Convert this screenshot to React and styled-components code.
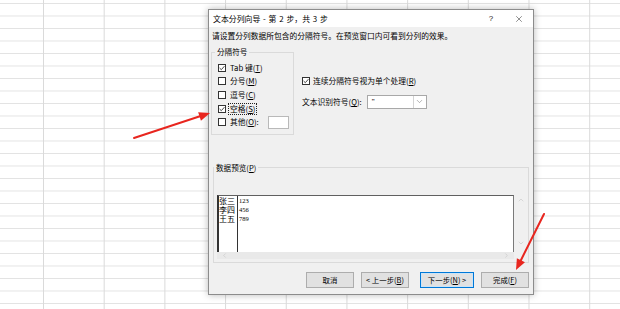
import React from 'react';
import styled, { createGlobalStyle } from 'styled-components';
import { X, ChevronDown, ChevronUp, ChevronLeft, ChevronRight } from 'lucide-react';

const Global = createGlobalStyle`
  html, body { margin: 0; padding: 0; }
  body {
    font-family: "Noto Sans CJK SC", "Noto Sans", sans-serif;
    color: #000;
  }
`;

// 表格背景：网格线
const Sheet = styled.div`
  position: relative;
  width: 620px;
  height: 309px;
  overflow: hidden;
  background-color: #fff;
  background-image:
    linear-gradient(to right, #dadada 1px, transparent 1px),
    linear-gradient(to bottom, #e2e2e2 1px, transparent 1px);
  background-size: 60.7px 100%, 100% 12.5px;
  background-position: 43px 0, 0 3px;
`;

const Dialog = styled.div`
  position: absolute;
  left: 208px;
  top: 9px;
  width: 326px;
  height: 286px;
  box-sizing: border-box;
  background: #f0f0f0;
  border: 1px solid #8c8c8c;
  box-shadow: 0 0 7px rgba(0, 0, 0, 0.28);
  display: flex;
  flex-direction: column;
  font-size: 7.75px;
`;

const TitleBar = styled.div`
  height: 17px;
  background: #fff;
  display: flex;
  align-items: center;
  padding-left: 4px;
  font-size: 7.9px;
`;

const Title = styled.span`
  flex: 1;
  white-space: pre;
  word-spacing: 1px;
`;

const TitleBtn = styled.span`
  width: 28px;
  height: 17px;
  display: flex;
  align-items: center;
  justify-content: center;
  font-family: "Liberation Sans", sans-serif;
  font-size: 8px;
  color: #222;
`;

const Body = styled.div`
  flex: 1;
  display: flex;
  flex-direction: column;
  padding: 0 2px 5px 2px;
`;

const Hint = styled.div`
  margin: 4px 0 0 1px;
  height: 9px;
  line-height: 9px;
  white-space: nowrap;
`;

const Middle = styled.div`
  display: flex;
  margin-top: 7px;
`;

const Group = styled.fieldset`
  margin: ${p => p.$mt || 0}px ${p => p.$mr || 0}px 0 ${p => p.$ml || 0}px;
  min-width: 0;
  width: ${p => (p.$w ? p.$w + 'px' : 'auto')};
  flex: none;
  box-sizing: border-box;
  border: 1px solid #dadada;
  padding: ${p => p.$pad};
`;

const Legend = styled.legend`
  margin-left: -3px;
  padding: 0 2px;
  line-height: 10px;
  height: 10px;
  font-size: 7.6px;
`;

const CheckRow = styled.div`
  display: flex;
  align-items: center;
  height: 13.6px;
  white-space: nowrap;
`;

const Box = styled.span`
  width: 8px;
  height: 8px;
  box-sizing: border-box;
  border: 1px solid #333;
  background: #fff;
  margin-right: 3px;
  display: flex;
  align-items: center;
  justify-content: center;
  flex: none;
`;

const Label = styled.span`
  line-height: 10px;
  padding: 0 1px;
  outline: ${p => (p.$focus ? '1px dotted #222' : 'none')};
`;

const Key = styled.span`
  text-decoration: underline;
`;

const OtherInput = styled.span`
  width: 21px;
  height: 13px;
  margin-left: 8px;
  box-sizing: border-box;
  border: 1px solid #b9b9b9;
  background: #fff;
`;

const Options = styled.div`
  display: flex;
  flex-direction: column;
  padding: 27px 0 0 8px;
`;

const OptRow = styled.div`
  display: flex;
  align-items: center;
  height: 13px;
  margin-bottom: ${p => p.$mb || 0}px;
  white-space: nowrap;
`;

const Select = styled.div`
  display: flex;
  width: 60px;
  height: 14px;
  margin-left: 5px;
  box-sizing: border-box;
  border: 1px solid #a8a8a8;
  background: #fff;
`;

const SelectValue = styled.span`
  flex: 1;
  padding-left: 4px;
  line-height: 11px;
  font-family: "Liberation Sans", sans-serif;
  font-size: 8px;
`;

const SelectArrow = styled.span`
  width: 12px;
  border-left: 1px solid #d4d4d4;
  display: flex;
  align-items: center;
  justify-content: center;
  color: #666;
`;

const Preview = styled.div`
  display: grid;
  grid-template-columns: 1fr 13px;
  grid-template-rows: 57px 7px;
`;

const DataArea = styled.div`
  grid-column: 1;
  grid-row: 1;
  background: #fff;
  border-top: 1px solid #606060;
  border-left: 2px solid #333;
  border-right: 1px solid #7a7a7a;
  display: flex;
`;

const DataCol = styled.div`
  width: ${p => (p.$w ? p.$w + 'px' : 'auto')};
  border-right: ${p => (p.$w ? '1px solid #333' : 'none')};
  padding-left: ${p => p.$pl || 0}px;
  font-family: ${p => (p.$num ? '"Liberation Serif", serif' : 'inherit')};
  font-size: ${p => (p.$num ? '6.5px' : '8px')};
  line-height: 9px;
`;

const DataCell = styled.div`
  height: 9px;
  white-space: nowrap;
`;

const VScroll = styled.div`
  grid-column: 2;
  grid-row: 1 / 3;
  display: flex;
  flex-direction: column;
  justify-content: space-between;
  align-items: center;
  padding: 1px 0 12px;
  color: #b3b3b3;
`;

const HScroll = styled.div`
  grid-column: 1;
  grid-row: 2;
  display: flex;
  justify-content: space-between;
  align-items: center;
  padding: 0 4px;
  background: #e9e9e9;
  color: #b3b3b3;
`;

const Buttons = styled.div`
  display: flex;
  justify-content: flex-end;
  margin-top: 9px;
  padding-right: 2px;
`;

const Button = styled.div`
  width: ${p => p.$w}px;
  height: 16px;
  margin-left: ${p => p.$gap}px;
  box-sizing: border-box;
  background: #e1e1e1;
  border: 1px solid ${p => (p.$primary ? '#0078d7' : '#adadad')};
  box-shadow: ${p => (p.$primary ? 'inset 0 0 0 1px #cce4f7' : 'none')};
  display: flex;
  align-items: center;
  justify-content: center;
  white-space: nowrap;
  font-size: 7.4px;
`;

const Marks = styled.svg`
  position: absolute;
  left: 0;
  top: 0;
  pointer-events: none;
`;

const Check = ({ on }) => (
  <Box>
    {on && (
      <svg width="6" height="6" viewBox="0 0 6 6">
        <polyline points="0.6,3 2.3,4.7 5.4,1.2" fill="none" stroke="#333" strokeWidth="0.9" />
      </svg>
    )}
  </Box>
);

const Arrow = ({ x1, y1, x2, y2 }) => {
  const a = Math.atan2(y2 - y1, x2 - x1);
  const len = 11;
  const w = 4.5;
  const bx = x2 - len * Math.cos(a);
  const by = y2 - len * Math.sin(a);
  const px = -Math.sin(a) * w;
  const py = Math.cos(a) * w;
  return (
    <g>
      <line x1={x1} y1={y1} x2={bx + Math.cos(a) * 2} y2={by + Math.sin(a) * 2} stroke="#e8261f" strokeWidth="2" strokeLinecap="round" />
      <polygon points={`${x2},${y2} ${bx + px},${by + py} ${bx - px},${by - py}`} fill="#e8261f" />
    </g>
  );
};

const delimiters = [
  { text: 'Tab 键(', key: 'T', on: true },
  { text: '分号(', key: 'M' },
  { text: '逗号(', key: 'C' },
  { text: '空格(', key: 'S', on: true, focus: true },
];

const rows = [
  ['张三', '123'],
  ['李四', '456'],
  ['王五', '789'],
];

export default function App() {
  return (
    <Sheet>
      <Global />
      <Dialog>
        <TitleBar>
          <Title>文本分列向导 - 第 2 步，共 3 步</Title>
          <TitleBtn>?</TitleBtn>
          <TitleBtn>
            <X size={10} strokeWidth={1.2} />
          </TitleBtn>
        </TitleBar>
        <Body>
          <Hint>请设置分列数据所包含的分隔符号。在预览窗口内可看到分列的效果。</Hint>
          <Middle>
            <Group $w={83} $pad="4px 0 5px 6px">
              <Legend>分隔符号</Legend>
              {delimiters.map(d => (
                <CheckRow key={d.key}>
                  <Check on={d.on} />
                  <Label $focus={d.focus}>
                    {d.text}<Key>{d.key}</Key>)
                  </Label>
                </CheckRow>
              ))}
              <CheckRow>
                <Check />
                <Label>
                  其他(<Key>O</Key>):
                </Label>
                <OtherInput />
              </CheckRow>
            </Group>
            <Options>
              <OptRow $mb={8}>
                <Check on />
                <span>
                  连续分隔符号视为单个处理(<Key>R</Key>)
                </span>
              </OptRow>
              <OptRow>
                <span>
                  文本识别符号(<Key>Q</Key>):
                </span>
                <Select>
                  <SelectValue>"</SelectValue>
                  <SelectArrow>
                    <ChevronDown size={9} strokeWidth={1.3} />
                  </SelectArrow>
                </Select>
              </OptRow>
            </Options>
          </Middle>
          <Group $ml={2} $mr={2} $mt={28} $pad="22px 1px 3px 3px">
            <Legend>
              数据预览(<Key>P</Key>)
            </Legend>
            <Preview>
              <DataArea>
                <DataCol $w={18}>
                  {rows.map(r => (
                    <DataCell key={r[0]}>{r[0]}</DataCell>
                  ))}
                </DataCol>
                <DataCol $num $pl={1}>
                  {rows.map(r => (
                    <DataCell key={r[1]}>{r[1]}</DataCell>
                  ))}
                </DataCol>
              </DataArea>
              <VScroll>
                <ChevronUp size={8} strokeWidth={1.3} />
                <ChevronDown size={8} strokeWidth={1.3} />
              </VScroll>
              <HScroll>
                <ChevronLeft size={7} strokeWidth={1.3} />
                <ChevronRight size={7} strokeWidth={1.3} />
              </HScroll>
            </Preview>
          </Group>
          <Buttons>
            <Button $w={48} $gap={0}>取消</Button>
            <Button $w={48} $gap={7}>
              &lt; 上一步(<Key>B</Key>)
            </Button>
            <Button $w={54} $gap={11} $primary>
              下一步(<Key>N</Key>) &gt;
            </Button>
            <Button $w={48} $gap={7}>
              完成(<Key>F</Key>)
            </Button>
          </Buttons>
        </Body>
      </Dialog>
      <Marks width="620" height="309">
        <Arrow x1={134} y1={138} x2={210} y2={113} />
        <Arrow x1={544} y1={214} x2={516} y2={270} />
      </Marks>
    </Sheet>
  );
}
